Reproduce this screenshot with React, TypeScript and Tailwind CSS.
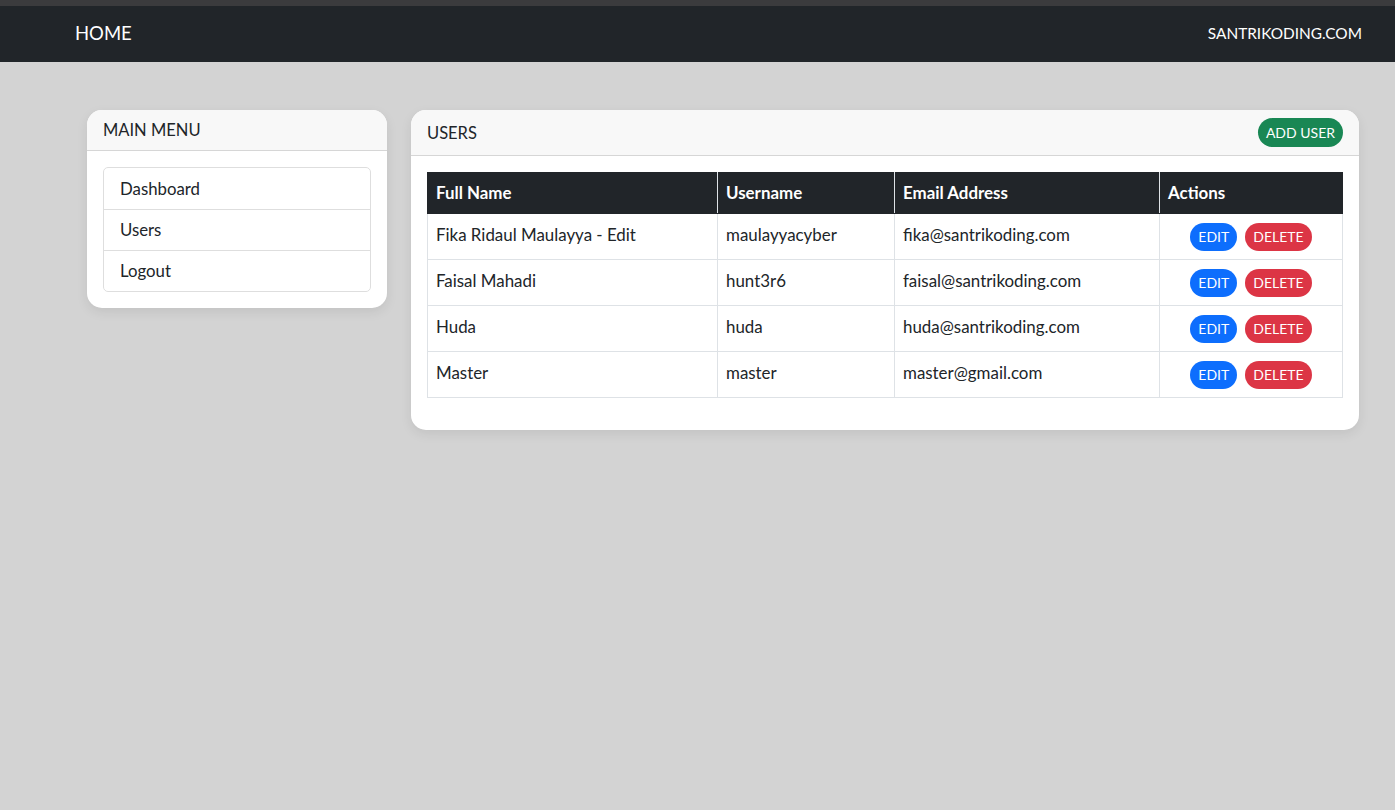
const users = [
  { name: "Fika Ridaul Maulayya - Edit", username: "maulayyacyber", email: "fika@santrikoding.com" },
  { name: "Faisal Mahadi", username: "hunt3r6", email: "faisal@santrikoding.com" },
  { name: "Huda", username: "huda", email: "huda@santrikoding.com" },
  { name: "Master", username: "master", email: "master@gmail.com" },
];

const menu = ["Dashboard", "Users", "Logout"];

export default function App() {
  return (
    <div className="min-h-[810px] bg-[#d3d3d3] text-[#212529] font-['Lato','Noto_Sans',sans-serif]">
      <div className="h-[6px] bg-[#3b3b3d]" />
      {/* NAVBAR */}
      <nav className="h-[56px] bg-[#212529] flex items-center justify-between pl-[75px] pr-[33px]">
        <span className="text-white text-[18.5px]">HOME</span>
        <span className="text-white text-[15.4px]">SANTRIKODING.COM</span>
      </nav>

      <div className="flex items-start gap-6 pt-12 pl-[87px] pr-9">
        {/* SIDEBAR */}
        <div className="w-[300px] bg-white rounded-[15px] shadow-[0_4px_12px_rgba(0,0,0,0.08)] overflow-hidden">
          <div className="h-[41px] bg-[#f8f8f8] border-b border-[#d6d6d6] flex items-center px-4 text-[16.5px]">
            MAIN MENU
          </div>
          <div className="p-4">
            <ul className="border border-[#dedede] rounded-[5px]">
              {menu.map((m, i) => (
                <li
                  key={m}
                  className={
                    "h-[41px] flex items-center px-4 text-[16.8px] " +
                    (i > 0 ? "border-t border-[#dedede]" : "")
                  }
                >
                  {m}
                </li>
              ))}
            </ul>
          </div>
        </div>

        {/* USERS CARD */}
        <div className="flex-1 bg-white rounded-[15px] shadow-[0_4px_12px_rgba(0,0,0,0.08)] overflow-hidden">
          <div className="h-[46px] bg-[#f8f8f8] border-b border-[#d6d6d6] flex items-center justify-between pl-4 pr-4 text-[16.5px]">
            <span className="mt-[2px]">USERS</span>
            <button className="h-[29px] px-2 rounded-full bg-[#198754] text-white text-[14px]">ADD USER</button>
          </div>
          <div className="px-4 pt-4 pb-8">
            <table className="w-full border-collapse text-[16.9px]">
              <thead>
                <tr className="bg-[#212529] text-white font-bold text-left h-[41px]">
                  <th className="w-[290px] px-2 border border-[#212529] border-r-[#dee2e6]">Full Name</th>
                  <th className="w-[177px] px-2 border border-[#212529] border-r-[#dee2e6]">Username</th>
                  <th className="w-[265px] px-2 border border-[#212529] border-r-[#dee2e6]">Email Address</th>
                  <th className="px-2 border border-[#212529]">Actions</th>
                </tr>
              </thead>
              <tbody>
                {users.map((u) => (
                  <tr key={u.username} className="h-[46px]">
                    <td className="px-2 pb-[4px] border border-[#dee2e6]">{u.name}</td>
                    <td className="px-2 pb-[4px] border border-[#dee2e6]">{u.username}</td>
                    <td className="px-2 pb-[4px] border border-[#dee2e6]">{u.email}</td>
                    <td className="px-2 border border-[#dee2e6]">
                      <div className="flex justify-center gap-2">
                        <button className="h-7 px-2 rounded-full bg-[#0d6efd] text-white text-[14px]">EDIT</button>
                        <button className="h-7 px-2 rounded-full bg-[#dc3545] text-white text-[14px]">DELETE</button>
                      </div>
                    </td>
                  </tr>
                ))}
              </tbody>
            </table>
          </div>
        </div>
      </div>
    </div>
  );
}
